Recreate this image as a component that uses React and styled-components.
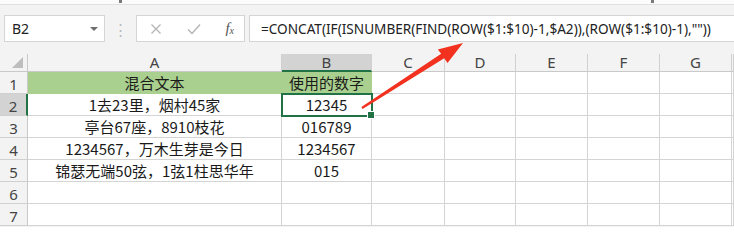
import React from 'react';
import styled, { createGlobalStyle } from 'styled-components';

const GlobalStyle = createGlobalStyle`
  * { box-sizing: border-box; }
  body {
    margin: 0;
    background: #ffffff;
    font-family: "Noto Sans CJK SC", "Noto Sans", sans-serif;
    overflow: hidden;
  }
`;

const columns = ['A', 'B', 'C', 'D', 'E', 'F', 'G'];

const rows = [
  ['混合文本', '使用的数字'],
  ['1去23里，烟村45家', '12345'],
  ['亭台67座，8910枝花', '016789'],
  ['1234567，万木生芽是今日', '1234567'],
  ['锦瑟无端50弦，1弦1柱思华年', '015'],
  ['', ''],
  ['', ''],
];

const formula = '=CONCAT(IF(ISNUMBER(FIND(ROW($1:$10)-1,$A2)),(ROW($1:$10)-1),""))';

const App = () => {
  return <React.Fragment>
    <GlobalStyle />
    <Window>
      <RibbonEdge>
        <Grip style={{ left: 119 }} />
        <Grip style={{ left: 651 }} />
      </RibbonEdge>

      <FormulaBar>
        <NameBox>
          <span>B2</span>
          <DropArrow />
        </NameBox>
        <Dots>⋮</Dots>
        <ButtonBox>
          <BarIcon viewBox="0 0 12 12" width="12" height="12">
            <path d="M1.5 1.5 L10.5 10.5 M10.5 1.5 L1.5 10.5" stroke="#b4b4b4" strokeWidth="1.3" fill="none" />
          </BarIcon>
          <BarIcon viewBox="0 0 14 12" width="14" height="12">
            <path d="M1 6.5 L5 10.5 L13 1.5" stroke="#b4b4b4" strokeWidth="1.4" fill="none" />
          </BarIcon>
          <FxLabel>f<sub>x</sub></FxLabel>
        </ButtonBox>
        <FormulaBox>{formula}</FormulaBox>
      </FormulaBar>

      <Sheet>
        <Corner><CornerTriangle /></Corner>
        {columns.map(col => (
          <ColHeader key={col} selected={col === 'B'}>{col}</ColHeader>
        ))}
        <ColHeader />

        {rows.map((row, i) => (
          <React.Fragment key={i}>
            <RowHeader selected={i === 1}>{i + 1}</RowHeader>
            <Cell filled={i === 0}>{row[0]}</Cell>
            <Cell filled={i === 0} active={i === 1}>{row[1]}</Cell>
            {columns.slice(2).map(col => <Cell key={col} />)}
            <Cell />
          </React.Fragment>
        ))}
      </Sheet>

      <ArrowLayer width="734" height="227" viewBox="0 0 734 227">
        <polygon
          points="463,43 447.5,63 444.2,58.3 362.6,109 361.4,107 441.2,53.7 437.8,49.5"
          fill="#f2311e"
        />
      </ArrowLayer>
    </Window>
  </React.Fragment>;
};

export default App;

const Window = styled.div`
  position: relative;
  width: 734px;
  height: 227px;
  overflow: hidden;
  background: #f3f3f3;
`;

const RibbonEdge = styled.div`
  position: relative;
  height: 5px;
  background: #fbfbfb;
  border-bottom: 1px solid #e1e1e1;
`;

const Grip = styled.div`
  position: absolute;
  top: 0;
  width: 3px;
  height: 3px;
  background: #7a7a7a;
`;

const FormulaBar = styled.div`
  display: flex;
  align-items: center;
  height: 49px;
  padding: 10px 0 12px 4px;
  background: #f3f3f3;
`;

const NameBox = styled.div`
  display: flex;
  align-items: center;
  justify-content: space-between;
  width: 101px;
  height: 27px;
  padding: 0 6px 0 7px;
  background: #ffffff;
  border: 1px solid #d5d5d5;
  font-family: "Noto Sans", sans-serif;
  font-size: 14px;
  color: #222;
`;

const DropArrow = styled.div`
  width: 0;
  height: 0;
  border-left: 4px solid transparent;
  border-right: 4px solid transparent;
  border-top: 4px solid #6e6e6e;
`;

const Dots = styled.div`
  width: 31px;
  text-align: center;
  color: #b9b9b9;
  font-size: 15px;
  line-height: 1;
`;

const ButtonBox = styled.div`
  display: flex;
  align-items: center;
  width: 109px;
  height: 27px;
  padding: 0 10px 0 13px;
  justify-content: space-between;
  background: #ffffff;
  border: 1px solid #d5d5d5;
`;

const BarIcon = styled.svg`
  display: block;
`;

const FxLabel = styled.span`
  font-family: "Liberation Serif", "DejaVu Serif", serif;
  font-style: italic;
  font-size: 15px;
  color: #555;
  line-height: 1;

  sub {
    font-size: 10px;
    vertical-align: -1px;
  }
`;

const FormulaBox = styled.div`
  flex: 1;
  height: 27px;
  margin-left: 4px;
  padding-left: 11px;
  display: flex;
  align-items: center;
  background: #ffffff;
  border: 1px solid #d5d5d5;
  border-right: none;
  font-family: "Noto Sans", sans-serif;
  font-size: 13.6px;
  color: #222;
  white-space: nowrap;
`;

const Sheet = styled.div`
  display: grid;
  grid-template-columns: 28px 254px 90px 73px 71px 72px 72px 72px 1fr;
  grid-template-rows: 18px repeat(7, 22px);
  background: #ffffff;
`;

const Corner = styled.div`
  position: relative;
  background: #f3f3f3;
  border-right: 1px solid #c9c9c9;
  border-bottom: 1px solid #c9c9c9;
`;

const CornerTriangle = styled.div`
  position: absolute;
  right: 4px;
  bottom: 3px;
  width: 0;
  height: 0;
  border-left: 11px solid transparent;
  border-bottom: 11px solid #bdbdbd;
`;

const ColHeader = styled.div`
  display: flex;
  align-items: center;
  justify-content: center;
  background: ${p => (p.selected ? '#d3d3d3' : '#f3f3f3')};
  border-right: 1px solid #d0d0d0;
  border-bottom: ${p => (p.selected ? '2px solid #217346' : '1px solid #c9c9c9')};
  font-family: "Noto Sans", sans-serif;
  font-size: 15px;
  color: #444;
  line-height: 1;
`;

const RowHeader = styled.div`
  display: flex;
  align-items: center;
  justify-content: center;
  background: ${p => (p.selected ? '#d3d3d3' : '#f3f3f3')};
  border-right: ${p => (p.selected ? '2px solid #217346' : '1px solid #c9c9c9')};
  border-bottom: 1px solid #d0d0d0;
  font-family: "Noto Sans", sans-serif;
  font-size: 15px;
  color: #444;
  padding-top: 2px;
`;

const Cell = styled.div`
  position: relative;
  display: flex;
  align-items: center;
  justify-content: center;
  white-space: nowrap;
  background: ${p => (p.filled ? '#a9d08e' : '#ffffff')};
  border-right: 1px solid ${p => (p.filled ? '#a9d08e' : '#d4d4d4')};
  border-bottom: 1px solid ${p => (p.filled ? '#a9d08e' : '#d4d4d4')};
  font-family: "Noto Sans CJK SC", "Noto Sans", sans-serif;
  font-size: 15px;
  color: #1a1a1a;
  ${p => p.active && `
    z-index: 1;
    outline: 2px solid #217346;
    outline-offset: -1px;

    &::after {
      content: '';
      position: absolute;
      right: -4px;
      bottom: -4px;
      width: 6px;
      height: 6px;
      background: #217346;
      border: 1px solid #ffffff;
    }
  `}
`;

const ArrowLayer = styled.svg`
  position: absolute;
  left: 0;
  top: 0;
  pointer-events: none;
  z-index: 2;
`;
